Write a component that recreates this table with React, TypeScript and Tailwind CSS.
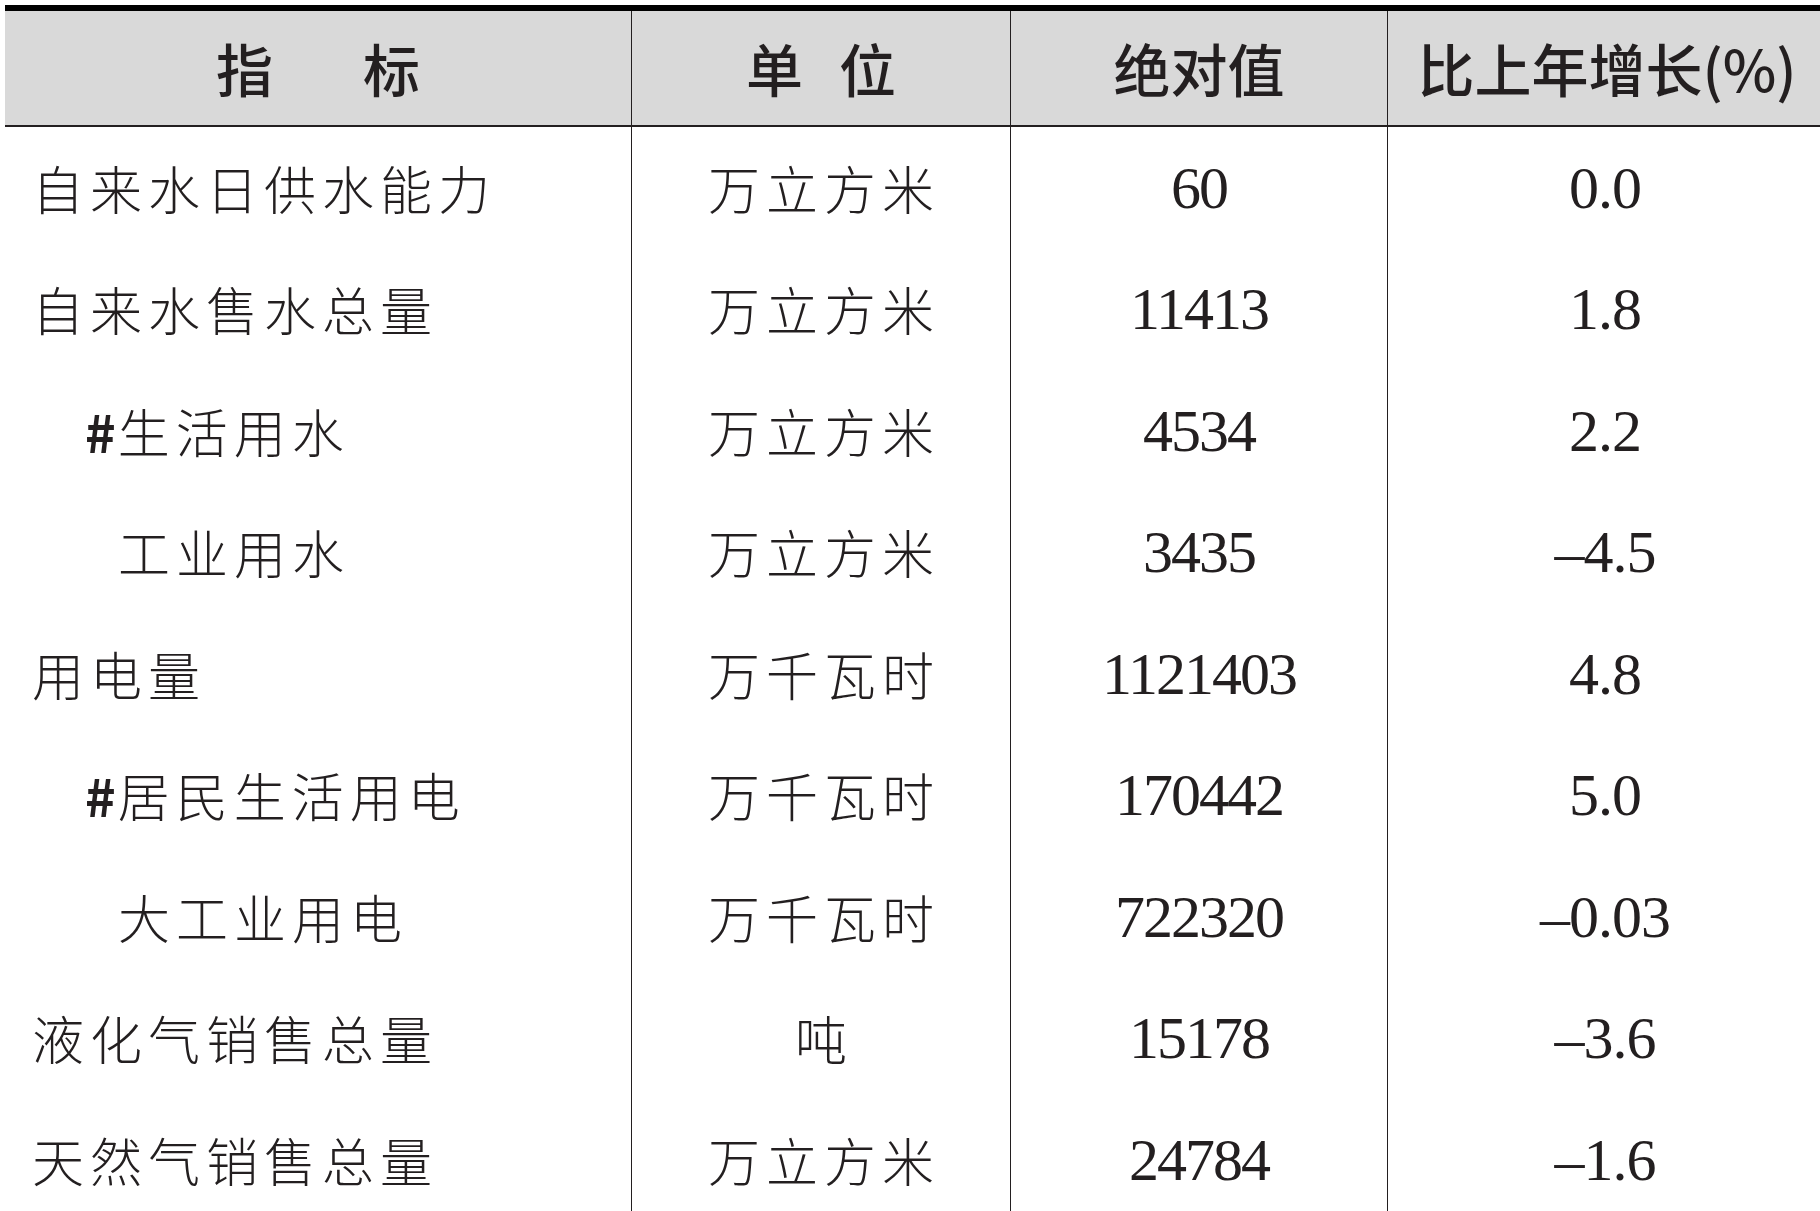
const rows = [
  { name: "自来水日供水能力", indent: 0, unit: "万立方米", value: "60", change: "0.0" },
  { name: "自来水售水总量", indent: 0, unit: "万立方米", value: "11413", change: "1.8" },
  { name: "#生活用水", indent: 1, unit: "万立方米", value: "4534", change: "2.2" },
  { name: "工业用水", indent: 2, unit: "万立方米", value: "3435", change: "–4.5" },
  { name: "用电量", indent: 0, unit: "万千瓦时", value: "1121403", change: "4.8" },
  { name: "#居民生活用电", indent: 1, unit: "万千瓦时", value: "170442", change: "5.0" },
  { name: "大工业用电", indent: 2, unit: "万千瓦时", value: "722320", change: "–0.03" },
  { name: "液化气销售总量", indent: 0, unit: "吨", value: "15178", change: "–3.6" },
  { name: "天然气销售总量", indent: 0, unit: "万立方米", value: "24784", change: "–1.6" },
];

const cjk = "font-['Noto_Sans_CJK_SC',sans-serif]";
const num = "font-['Liberation_Serif','Times_New_Roman',serif]";

const indentClass = ["pl-[27px]", "pl-[80px]", "pl-[113px]"];

const NameCell = ({ name, indent }: { name: string; indent: number }) => {
  const hash = name.startsWith("#");
  return (
    <div className={`flex items-center ${indentClass[indent]} text-[52px] font-light tracking-[6px] text-[#231f20] ${cjk}`}>
      {hash && <span className="font-bold tracking-[0px] mr-[2px]">#</span>}
      <span>{hash ? name.slice(1) : name}</span>
    </div>
  );
};

const App = () => {
  return (
    <div className="w-[1820px] h-[1211px] overflow-hidden bg-white pt-[5px] pl-[5px]">
      <div className="border-t-[6px] border-black">
        {/* header */}
        <div className={`grid grid-cols-[626px_379px_377px_1fr] h-[116px] bg-[#d9d9d9] border-b-2 border-[#231f20] text-[57px] font-medium text-[#231f20] ${cjk}`}>
          <div className="flex items-center justify-center gap-[90px]">
            <span>指</span>
            <span>标</span>
          </div>
          <div className="flex items-center justify-center gap-[36px] border-l-[1.5px] border-[#231f20]">
            <span>单</span>
            <span>位</span>
          </div>
          <div className="flex items-center justify-center border-l-[1.5px] border-[#231f20]">绝对值</div>
          <div className="flex items-center justify-center border-l-[1.5px] border-[#231f20] pl-[6px]">比上年增长(%)</div>
        </div>

        {/* body */}
        {rows.map((r) => (
          <div key={r.name} className="grid grid-cols-[626px_379px_377px_1fr] h-[121.5px]">
            <NameCell name={r.name} indent={r.indent} />
            <div className={`flex items-center justify-center border-l-[1.5px] border-[#231f20] text-[52px] font-light tracking-[6px] pl-[6px] text-[#231f20] ${cjk}`}>
              {r.unit}
            </div>
            <div className={`flex items-center justify-center border-l-[1.5px] border-[#231f20] text-[60px] tracking-[-2px] text-[#231f20] ${num}`}>
              {r.value}
            </div>
            <div className={`flex items-center justify-center border-l-[1.5px] border-[#231f20] text-[60px] tracking-[-1px] text-[#231f20] pl-[2px] ${num}`}>
              {r.change}
            </div>
          </div>
        ))}
      </div>
    </div>
  );
};

export default App;
